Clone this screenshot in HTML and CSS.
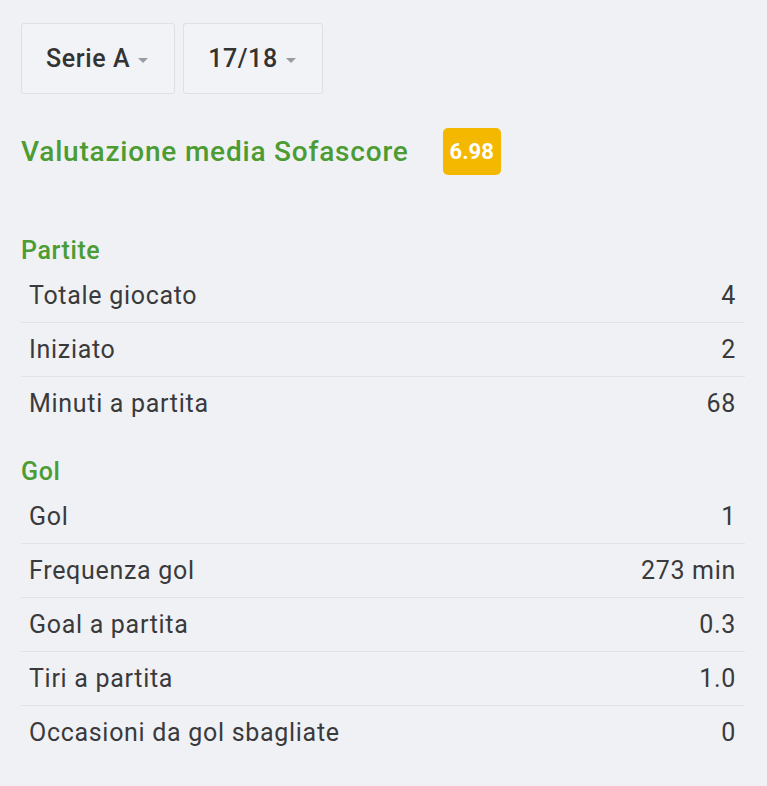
FILE: index.html
```html
<!DOCTYPE html>
<html lang="it">

<head>
    <meta charset="UTF-8">
    <meta name="viewport" content="width=device-width, initial-scale=1.0">
    <title>Statistiche giocatore</title>
    <link rel="stylesheet" href="styles.css">
</head>

<body>
    <div class="page">
        <div class="filters">
            <div class="dropdown">Serie A <span class="caret"></span></div>
            <div class="dropdown">17/18 <span class="caret"></span></div>
        </div>

        <div class="rating">
            <span class="rating-label">Valutazione media Sofascore</span>
            <span class="badge">6.98</span>
        </div>

        <div class="section">
            <h3>Partite</h3>
            <div class="row"><span>Totale giocato</span><span>4</span></div>
            <div class="row"><span>Iniziato</span><span>2</span></div>
            <div class="row"><span>Minuti a partita</span><span>68</span></div>
        </div>

        <div class="section">
            <h3>Gol</h3>
            <div class="row"><span>Gol</span><span>1</span></div>
            <div class="row"><span>Frequenza gol</span><span>273 min</span></div>
            <div class="row"><span>Goal a partita</span><span>0.3</span></div>
            <div class="row"><span>Tiri a partita</span><span>1.0</span></div>
            <div class="row"><span>Occasioni da gol sbagliate</span><span>0</span></div>
        </div>
    </div>
</body>

</html>
```

FILE: styles.css
```css
body {
    margin: 0;
    background-color: #f0f1f5;
    color: #3a3a3c;
    font-family: Roboto, "Liberation Sans", sans-serif;
}

.page {
    padding: 23px 22px 20px 21px;
}

.filters {
    display: flex;
    gap: 8px;
}

.dropdown {
    display: flex;
    align-items: center;
    height: 69px;
    padding: 0 26px 0 24px;
    border: 1px solid #dfe0e5;
    border-radius: 3px;
    background-color: #f2f3f6;
    font-size: 25px;
    letter-spacing: 0.6px;
    font-weight: 500;
    color: #333;
}

.caret {
    display: inline-block;
    margin-left: 8px;
    margin-top: 3px;
    border-left: 5px solid transparent;
    border-right: 5px solid transparent;
    border-top: 5px solid #9a9ba0;
}

.rating {
    display: flex;
    align-items: center;
    margin-top: 34px;
}

.rating-label {
    font-size: 28px;
    letter-spacing: 0.8px;
    font-weight: 500;
    color: #4c9c33;
}

.badge {
    margin-left: 34px;
    width: 58px;
    height: 47px;
    line-height: 47px;
    text-align: center;
    border-radius: 5px;
    background-color: #f4b800;
    color: white;
    font-size: 22px;
    font-weight: 700;
}

.section {
    margin-top: 24px;
}

.rating + .section {
    margin-top: 58px;
}

.section h3 {
    margin: 0;
    height: 36px;
    line-height: 36px;
    font-size: 25px;
    letter-spacing: 0.6px;
    font-weight: 500;
    color: #4c9c33;
}

.row {
    display: flex;
    justify-content: space-between;
    align-items: center;
    height: 53px;
    padding: 0 9px 0 8px;
    border-bottom: 1px solid #e2e3e8;
    font-size: 25px;
    letter-spacing: 0.7px;
}

.row:last-child {
    border-bottom: none;
}
```
